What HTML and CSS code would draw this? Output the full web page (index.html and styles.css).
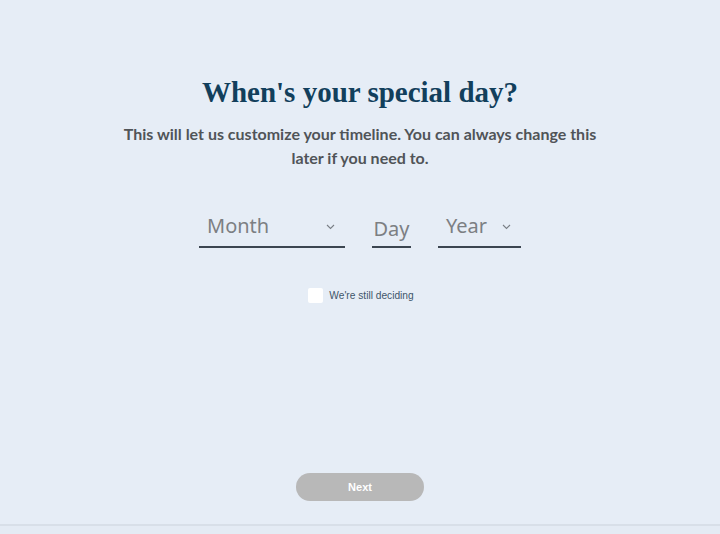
FILE: index.html
```html
<!DOCTYPE html>
<html lang="en">
<head>
<meta charset="utf-8">
<title>When's your special day?</title>
<link rel="stylesheet" href="styles.css">
</head>
<body>
<main class="page">
  <section class="content">
    <h1 class="title">When's your special day?</h1>
    <p class="subtitle">This will let us customize your timeline. You can always change this<br>later if you need to.</p>
    <div class="date-row">
      <div class="field field-month">
        <span class="field-text">Month</span>
        <svg class="chev" width="9" height="6" viewBox="0 0 9 6"><path d="M1 1l3.5 3.5L8 1" fill="none" stroke="#7a7f86" stroke-width="1.1"/></svg>
      </div>
      <div class="field field-day">
        <span class="field-text day-text">Day</span>
      </div>
      <div class="field field-year">
        <span class="field-text">Year</span>
        <svg class="chev" width="9" height="6" viewBox="0 0 9 6"><path d="M1 1l3.5 3.5L8 1" fill="none" stroke="#7a7f86" stroke-width="1.1"/></svg>
      </div>
    </div>
    <label class="check">
      <span class="box"></span>
      <span class="check-label">We're still deciding</span>
    </label>
  </section>
  <div class="actions">
    <button class="next" type="button">Next</button>
  </div>
  <footer class="footer"></footer>
</main>
</body>
</html>
```
FILE: styles.css
```css
html, body {
  margin: 0;
  padding: 0;
  background: #e6edf6;
}
.page {
  height: 534px;
  display: flex;
  flex-direction: column;
  font-family: "Liberation Sans", Arial, sans-serif;
}
.content {
  display: flex;
  flex-direction: column;
  align-items: center;
  padding-top: 74px;
  flex: 1;
}
.title {
  margin: 0;
  font-family: "Liberation Serif", "Times New Roman", serif;
  font-weight: 700;
  font-size: 29px;
  line-height: 36px;
  color: #123f5c;
}
.subtitle {
  margin: 12px 0 0;
  width: 560px;
  text-align: center;
  font-family: "Lato", sans-serif;
  font-weight: 700;
  font-size: 16px;
  line-height: 24px;
  color: #505458;
}
.date-row {
  margin-top: 40px;
  display: flex;
  gap: 27px;
  align-items: flex-end;
}
.field {
  height: 38px;
  padding-bottom: 4px;
  border-bottom: 2px solid #3c4651;
  display: flex;
  align-items: center;
  justify-content: space-between;
  box-sizing: border-box;
}
.field-month { width: 146px; padding-left: 8px; padding-right: 10px; }
.field-day { width: 39px; justify-content: center; padding-bottom: 0; }
.field-year { width: 83px; padding-left: 8px; padding-right: 10px; }
.field-text {
  font-family: "Noto Sans", sans-serif;
  font-size: 20px;
  color: #7c7f83;
  line-height: 24px;
}
.day-text { margin-top: 2px; }
.chev { display: block; margin-top: 2px; }
.check {
  margin-top: 40px;
  display: flex;
  align-items: center;
  gap: 6px;
  margin-left: 2px;
}
.box {
  width: 15px;
  height: 15px;
  background: #ffffff;
  border-radius: 2px;
}
.check-label {
  font-size: 10.2px;
  color: #40556a;
}
.actions {
  display: flex;
  justify-content: center;
  padding-bottom: 23px;
}
.next {
  width: 128px;
  height: 28px;
  border: 0;
  border-radius: 14px;
  background: #b8b8b8;
  color: #ffffff;
  font-family: "Liberation Sans", Arial, sans-serif;
  font-weight: 700;
  font-size: 11px;
}
.footer {
  height: 10px;
  background: #e4ebf4;
  border-top: 2px solid #d8dfe8;
  box-sizing: border-box;
}
```
